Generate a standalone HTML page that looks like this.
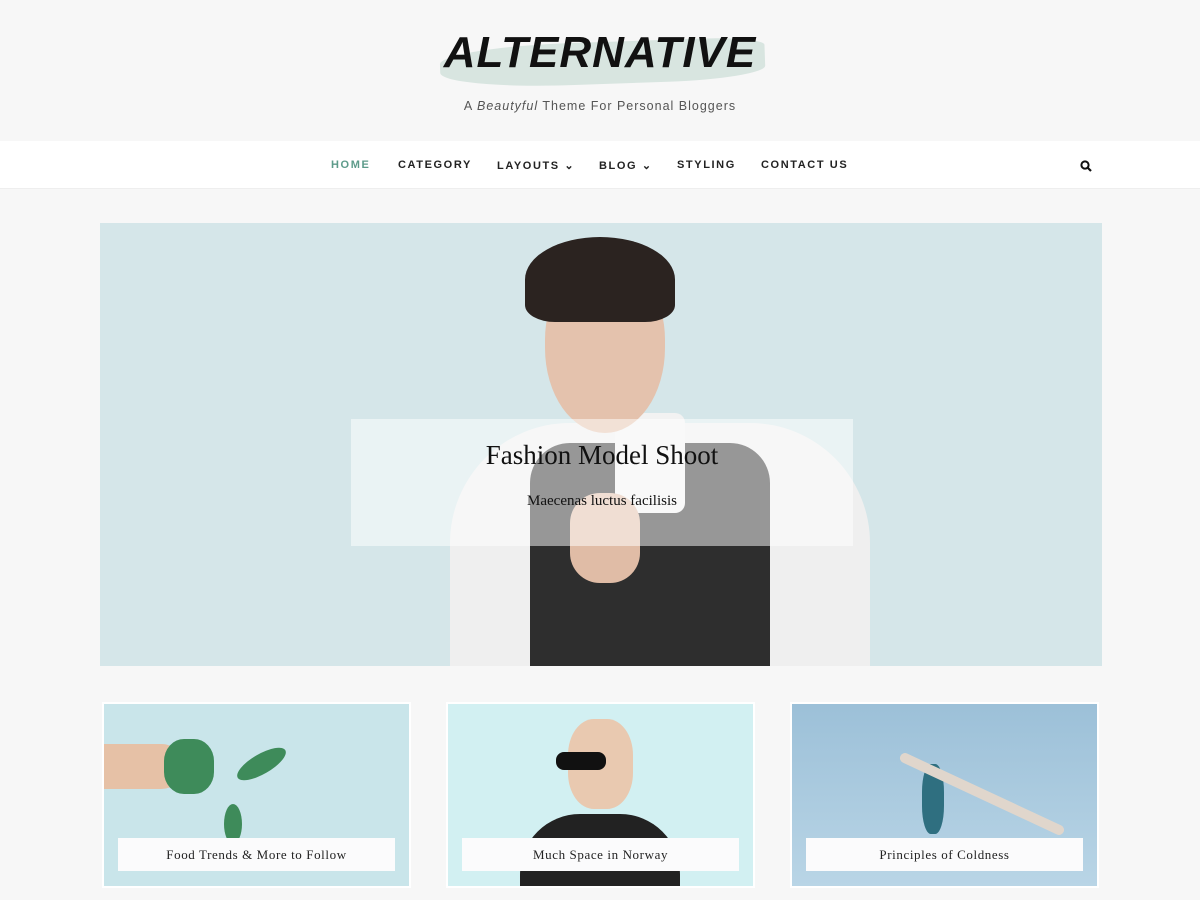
<!DOCTYPE html>
<html><head><style>
*{margin:0;padding:0;box-sizing:border-box}
body{width:1200px;height:900px;background:#f7f7f7;font-family:"Liberation Sans",sans-serif;position:relative;overflow:hidden}
.abs{position:absolute}
.logo{left:0;width:1200px;top:28px;text-align:center;font-family:"Liberation Sans",sans-serif;font-weight:900;font-style:italic;font-size:44px;letter-spacing:1px;color:#111}
.brush{left:440px;top:42px;width:325px;height:42px;background:#d8e5e0;border-radius:40% 20% 30% 40%;transform:rotate(-2deg)}
.tag{left:0;width:1200px;top:99px;text-align:center;font-size:12.5px;letter-spacing:1px;color:#555}
nav{left:0;top:141px;width:1200px;height:48px;background:#fff;border-bottom:1px solid #eee}
nav span{position:absolute;top:18px;font-size:11px;font-weight:bold;letter-spacing:1.6px;color:#222}
.hero{left:100px;top:223px;width:1002px;height:443px;background:#d5e6e9;overflow:hidden}
.ov{left:351px;top:419px;width:502px;height:127px;background:rgba(255,255,255,.5)}
.ser{font-family:"Liberation Serif","DejaVu Serif",serif}
.card{top:702px;width:309px;height:186px;border:2px solid #fff;overflow:hidden}
.lab{left:14px;top:134px;width:277px;height:33px;background:#fbfbfc;text-align:center;line-height:33px;font-size:13px;letter-spacing:.6px;color:#222}
</style></head><body>
<div class="abs brush"></div>
<div class="abs logo">ALTERNATIVE</div>
<div class="abs tag">A <i>Beautyful</i> Theme For Personal Bloggers</div>
<nav class="abs">
<span style="left:331px;color:#5d9b8a">HOME</span>
<span style="left:398px">CATEGORY</span>
<span style="left:497px">LAYOUTS ⌄</span>
<span style="left:599px">BLOG ⌄</span>
<span style="left:677px">STYLING</span>
<span style="left:761px">CONTACT US</span>
<svg style="position:absolute;left:1080px;top:19px" width="12" height="12" viewBox="0 0 12 12"><circle cx="5" cy="5" r="3.6" fill="none" stroke="#111" stroke-width="2"/><line x1="7.6" y1="7.6" x2="11" y2="11" stroke="#111" stroke-width="2.2"/></svg>
</nav>
<div class="abs hero">
<div class="abs" style="left:350px;top:200px;width:420px;height:260px;background:#efefef;border-radius:120px 120px 0 0"></div>
<div class="abs" style="left:430px;top:220px;width:240px;height:240px;background:#2e2e2e;border-radius:40px 40px 0 0"></div>
<div class="abs" style="left:515px;top:190px;width:70px;height:100px;background:#f2f2f2;border-radius:10px"></div>
<div class="abs" style="left:445px;top:40px;width:120px;height:170px;background:#e4c2ad;border-radius:45% 45% 50% 50%"></div>
<div class="abs" style="left:425px;top:14px;width:150px;height:85px;background:#2b2320;border-radius:50% 50% 20% 20%"></div>
<div class="abs" style="left:470px;top:270px;width:70px;height:90px;background:#e0bca6;border-radius:30px"></div>
</div>
<div class="abs ov"></div>
<div class="abs ser" style="left:351px;width:502px;top:440px;text-align:center;font-size:27px;color:#111">Fashion Model Shoot</div>
<div class="abs ser" style="left:351px;width:502px;top:493px;text-align:center;font-size:15px;color:#111">Maecenas luctus facilisis</div>

<div class="abs card" style="left:102px;background:#c9e5ea">
<div class="abs" style="left:0;top:40px;width:80px;height:45px;background:#e6c1a6;border-radius:0 30px 30px 0"></div>
<div class="abs" style="left:60px;top:35px;width:50px;height:55px;background:#3e8b5a;border-radius:40%"></div>
<div class="abs" style="left:130px;top:50px;width:55px;height:20px;background:#3e8b5a;border-radius:50%;transform:rotate(-30deg)"></div>
<div class="abs" style="left:120px;top:100px;width:18px;height:40px;background:#3e8b5a;border-radius:50%"></div>
<div class="abs lab ser">Food Trends &amp; More to Follow</div></div>
<div class="abs card" style="left:446px;background:#d2f0f2">
<div class="abs" style="left:72px;top:110px;width:160px;height:80px;background:#222;border-radius:60px 60px 0 0"></div>
<div class="abs" style="left:120px;top:15px;width:65px;height:90px;background:#e9c9b0;border-radius:40%"></div>
<div class="abs" style="left:108px;top:48px;width:50px;height:18px;background:#111;border-radius:8px"></div>
<div class="abs lab ser">Much Space in Norway</div></div>
<div class="abs card" style="left:790px;background:linear-gradient(#9cc0d8,#b9d5e6)">
<div class="abs" style="left:130px;top:60px;width:22px;height:70px;background:#2f6f80;border-radius:40%"></div>
<div class="abs" style="left:100px;top:85px;width:180px;height:10px;background:#e0d6cc;transform:rotate(25deg);border-radius:5px"></div>
<div class="abs lab ser">Principles of Coldness</div></div>
</body></html>
